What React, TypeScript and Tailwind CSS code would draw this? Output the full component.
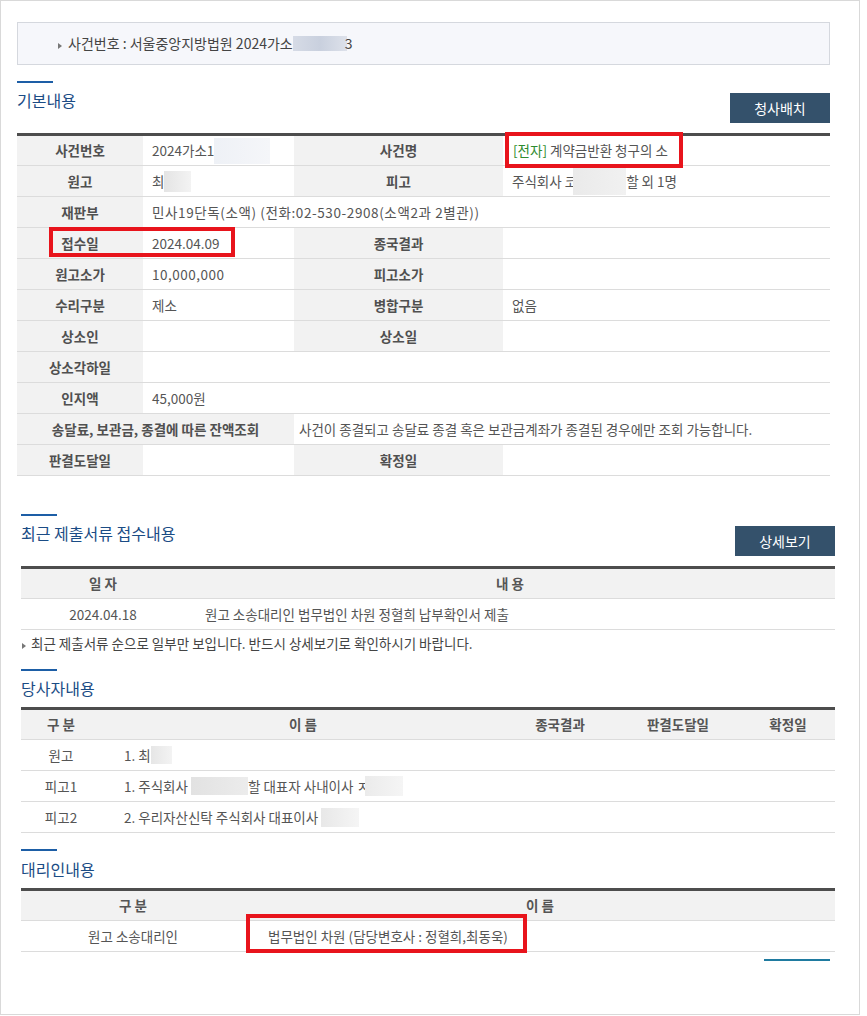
import React from "react";

const Blob = ({ className }: { className: string }) => (
  <span className={"inline-block align-middle " + className} />
);

const Tri = ({ className }: { className?: string }) => (
  <svg width="4" height="6" viewBox="0 0 4 6" className={"inline-block " + (className ?? "")}>
    <path d="M0 0 L4 3 L0 6 Z" fill="#777" />
  </svg>
);

const L = ({ w, children }: { w: string; children?: React.ReactNode }) => (
  <div className={"flex shrink-0 items-center justify-center bg-[#f2f2f2] font-bold text-[#505050] " + w}>{children}</div>
);
const V = ({ w, children, pl = "pl-[9px]" }: { w: string; children?: React.ReactNode; pl?: string }) => (
  <div className={"flex items-center text-[#555] whitespace-nowrap " + w + " " + pl}>{children}</div>
);

const Row = ({ children, h = "h-[31px]" }: { children: React.ReactNode; h?: string }) => (
  <div className={"flex border-b border-[#dcdcdc] " + h}>{children}</div>
);

const Bar = ({ className }: { className: string }) => (
  <div className={"h-[2px] w-[36px] bg-[#1d5ea6] " + className} />
);

const Title = ({ children, className }: { children: React.ReactNode; className?: string }) => (
  <div className={"text-[16px] leading-[20px] text-[#1b4c85] " + (className ?? "")}>{children}</div>
);

const Btn = ({ children }: { children: React.ReactNode }) => (
  <div className="mt-[10px] flex h-[30px] w-[100px] items-center justify-center bg-[#34516b] text-[14px] text-white">
    {children}
  </div>
);

const RedBox = ({ className }: { className: string }) => (
  <div className={"pointer-events-none absolute border-[4px] border-[#e8141c] " + className} />
);

export default function App() {
  return (
    <div className="relative h-[1016px] w-[867px] bg-white text-[13.5px] font-['Noto_Sans_CJK_KR','Noto_Sans',sans-serif] text-[#555]">
      <div className="h-[1015px] w-[860px] border border-[#d9d9d9]">
        {/* Section 1 */}
        <div className="ml-[16px] w-[813px]">
          <div className="mt-[21px] flex h-[43px] items-center border border-[#d5d8de] bg-[#f6f7fb] pl-[40px] text-[14px] text-[#444]">
            <Tri className="mr-[6px] mt-[5px]" />
            <span>사건번호 : 서울중앙지방법원 2024가소</span>
            <Blob className="h-[15px] w-[54px] bg-gradient-to-r from-[#d6dbe6] via-[#c9d0de] to-[#dde1ea]" />
            <span className="-ml-[2px]">3</span>
          </div>
          <Bar className="mt-[16px]" />
          <div className="flex items-start justify-between">
            <Title className="mt-[7px]">기본내용</Title>
            <Btn>청사배치</Btn>
          </div>
          <div className="mt-[10px] border-t-[3px] border-[#4d4d4d]">
            <Row h="h-[30px]">
              <L w="w-[126px]">사건번호</L>
              <V w="w-[151px]">
                2024가소1
                <Blob className="h-[26px] w-[56px] bg-gradient-to-r from-[#eef1f6] to-[#f5f6f9]" />
              </V>
              <L w="w-[209px]">사건명</L>
              <V w="flex-1" pl="pl-[10px]">
                <span className="text-[#2e8b2e]">[전자]</span>&nbsp;계약금반환 청구의 소
              </V>
            </Row>
            <Row>
              <L w="w-[126px]">원고</L>
              <V w="w-[151px]">
                최<Blob className="h-[21px] w-[27px] bg-gradient-to-r from-[#e4e4e4] to-[#f3f3f3]" />
              </V>
              <L w="w-[209px]">피고</L>
              <V w="flex-1">
                주식회사 코
                <Blob className="-ml-[4px] h-[27px] w-[53px] bg-gradient-to-r from-[#eaeaea] to-[#f1f1f1]" />
                할 외 1명
              </V>
            </Row>
            <Row>
              <L w="w-[126px]">재판부</L>
              <V w="flex-1">
                <span className="tracking-[0.6px]">민사19단독(소액) (전화:02-530-2908(소액2과 2별관))</span>
              </V>
            </Row>
            <Row>
              <L w="w-[126px]">접수일</L>
              <V w="w-[151px]">2024.04.09</V>
              <L w="w-[209px]">종국결과</L>
              <V w="flex-1"></V>
            </Row>
            <Row>
              <L w="w-[126px]">원고소가</L>
              <V w="w-[151px]"><span className="tracking-[0.5px]">10,000,000</span></V>
              <L w="w-[209px]">피고소가</L>
              <V w="flex-1"></V>
            </Row>
            <Row>
              <L w="w-[126px]">수리구분</L>
              <V w="w-[151px]">제소</V>
              <L w="w-[209px]">병합구분</L>
              <V w="flex-1">없음</V>
            </Row>
            <Row>
              <L w="w-[126px]">상소인</L>
              <V w="w-[151px]"></V>
              <L w="w-[209px]">상소일</L>
              <V w="flex-1"></V>
            </Row>
            <Row>
              <L w="w-[126px]">상소각하일</L>
              <V w="flex-1"></V>
            </Row>
            <Row>
              <L w="w-[126px]">인지액</L>
              <V w="flex-1">45,000원</V>
            </Row>
            <Row>
              <L w="w-[277px]">송달료, 보관금, 종결에 따른 잔액조회</L>
              <V w="flex-1" pl="pl-[5px]">사건이 종결되고 송달료 종결 혹은 보관금계좌가 종결된 경우에만 조회 가능합니다.</V>
            </Row>
            <Row>
              <L w="w-[126px]">판결도달일</L>
              <V w="w-[151px]"></V>
              <L w="w-[209px]">확정일</L>
              <V w="flex-1"></V>
            </Row>
          </div>
        </div>

        {/* Section 2 */}
        <div className="ml-[20px] w-[814px]">
          <Bar className="mt-[38px]" />
          <div className="flex items-start justify-between">
            <Title className="mt-[7px]">최근 제출서류 접수내용</Title>
            <Btn>상세보기</Btn>
          </div>
          <div className="mt-[10px] border-t-[3px] border-[#4d4d4d]">
            <div className="flex h-[30px] border-b border-[#dcdcdc] bg-[#f2f2f2] font-bold text-[#555]">
              <div className="flex w-[164px] items-center justify-center">일 자</div>
              <div className="flex flex-1 items-center justify-center">내 용</div>
            </div>
            <Row>
              <div className="flex w-[164px] items-center justify-center">2024.04.18</div>
              <div className="flex flex-1 items-center pl-[20px]">원고 소송대리인 법무법인 차원 정혈희 납부확인서 제출</div>
            </Row>
          </div>
          <div className="mt-[3px] flex h-[20px] items-center text-[#444]">
            <Tri className="ml-[1px] mr-[5px] mt-[5px]" />
            최근 제출서류 순으로 일부만 보입니다. 반드시 상세보기로 확인하시기 바랍니다.
          </div>

          {/* Section 3 */}
          <Bar className="mt-[16px]" />
          <Title className="mt-[7px]">당사자내용</Title>
          <div className="mt-[9px] border-t-[3px] border-[#4d4d4d]">
            <div className="flex h-[30px] border-b border-[#dcdcdc] bg-[#f2f2f2] font-bold text-[#555]">
              <div className="flex w-[80px] items-center justify-center">구 분</div>
              <div className="flex w-[404px] items-center justify-center">이 름</div>
              <div className="flex w-[110px] items-center justify-center">종국결과</div>
              <div className="flex w-[126px] items-center justify-center">판결도달일</div>
              <div className="flex flex-1 items-center justify-center">확정일</div>
            </div>
            <Row>
              <div className="flex w-[80px] items-center justify-center">원고</div>
              <div className="flex flex-1 items-center pl-[23px]">
                1. 최<Blob className="h-[18px] w-[21px] bg-gradient-to-r from-[#e6e6e6] to-[#f3f3f3]" />
              </div>
            </Row>
            <Row>
              <div className="flex w-[80px] items-center justify-center">피고1</div>
              <div className="flex flex-1 items-center pl-[23px] whitespace-nowrap">
                1. 주식회사&nbsp;
                <Blob className="h-[18px] w-[57px] bg-gradient-to-r from-[#e2e2e2] to-[#ececec]" />
                할 대표자 사내이사 ㅈ
                <Blob className="-ml-[4px] h-[20px] w-[38px] bg-gradient-to-r from-[#ebebeb] to-[#f5f5f5]" />
              </div>
            </Row>
            <Row>
              <div className="flex w-[80px] items-center justify-center">피고2</div>
              <div className="flex flex-1 items-center pl-[23px] whitespace-nowrap">
                2. 우리자산신탁 주식회사 대표이사&nbsp;
                <Blob className="h-[19px] w-[38px] bg-gradient-to-r from-[#e8e8e8] to-[#f5f5f5]" />
              </div>
            </Row>
          </div>

          {/* Section 4 */}
          <Bar className="mt-[16px]" />
          <Title className="mt-[8px]">대리인내용</Title>
          <div className="mt-[9px] border-t-[3px] border-[#4d4d4d]">
            <div className="flex h-[30px] border-b border-[#dcdcdc] bg-[#f2f2f2] font-bold text-[#555]">
              <div className="flex w-[224px] items-center justify-center">구 분</div>
              <div className="flex flex-1 items-center justify-center">이 름</div>
            </div>
            <Row>
              <div className="flex w-[224px] items-center justify-center">원고 소송대리인</div>
              <div className="flex flex-1 items-center pl-[23px]">법무법인 차원 (담당변호사 : 정혈희,최동욱)</div>
            </Row>
          </div>
          <div className="ml-[743px] mt-[7px] h-[2px] w-[66px] bg-[#1f7ba0]" />
        </div>
      </div>

      <RedBox className="left-[505px] top-[132px] h-[36px] w-[178px]" />
      <RedBox className="left-[49px] top-[227px] h-[30px] w-[186px]" />
      <RedBox className="left-[246px] top-[914px] h-[39px] w-[281px]" />
    </div>
  );
}
